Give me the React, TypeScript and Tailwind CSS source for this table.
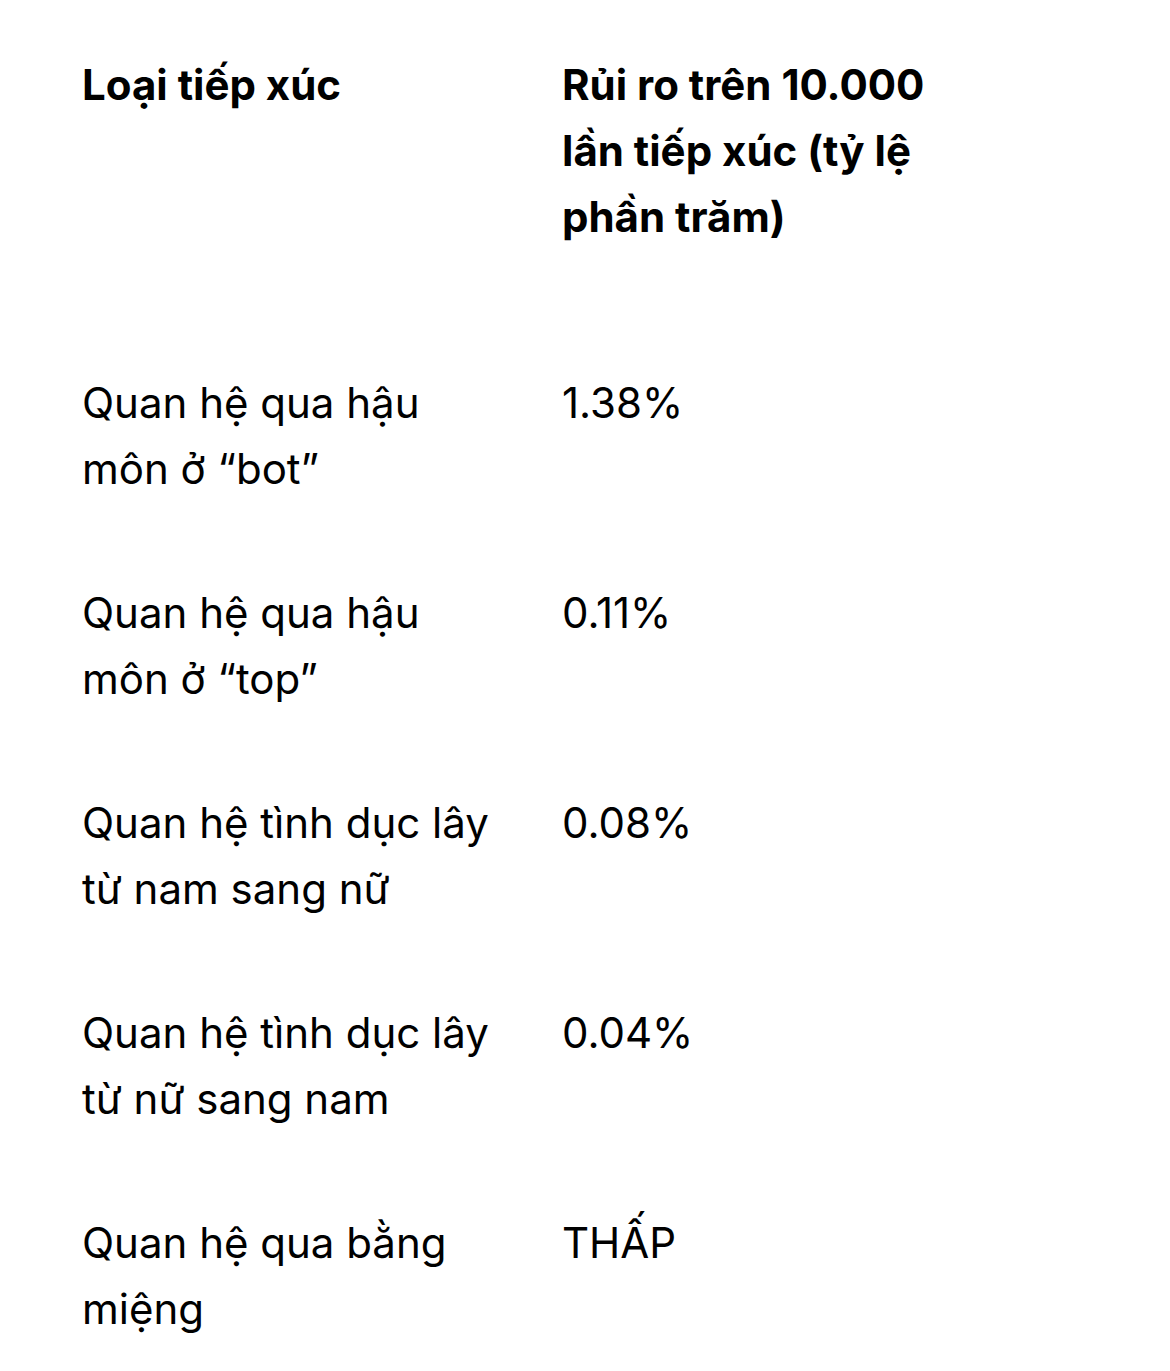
const rows = [
  { type: "Quan hệ qua hậu môn ở “bot”", risk: "1.38%" },
  { type: "Quan hệ qua hậu môn ở “top”", risk: "0.11%" },
  { type: "Quan hệ tình dục lây từ nam sang nữ", risk: "0.08%" },
  { type: "Quan hệ tình dục lây từ nữ sang nam", risk: "0.04%" },
  { type: "Quan hệ qua bằng miệng", risk: "THẤP" },
];

export default function App() {
  return (
    <div
      className="min-h-screen bg-white pt-[52px] pl-[82px] text-black"
      style={{ fontFamily: "Inter, 'Noto Sans', sans-serif" }}
    >
      <table className="table-fixed border-collapse text-left text-[42px] leading-[66px]">
        <thead>
          <tr>
            <th className="w-[480px] p-0 pr-[65px] pb-[120px] align-top font-bold">
              Loại tiếp xúc
            </th>
            <th className="w-[375px] p-0 pb-[120px] align-top font-bold">
              Rủi ro trên 10.000 lần tiếp xúc (tỷ lệ phần trăm)
            </th>
          </tr>
        </thead>
        <tbody>
          {rows.map((r) => (
            <tr key={r.type}>
              <td className="p-0 pr-[65px] pb-[78px] align-top font-normal">
                {r.type}
              </td>
              <td className="p-0 pb-[78px] align-top font-normal">{r.risk}</td>
            </tr>
          ))}
        </tbody>
      </table>
    </div>
  );
}
